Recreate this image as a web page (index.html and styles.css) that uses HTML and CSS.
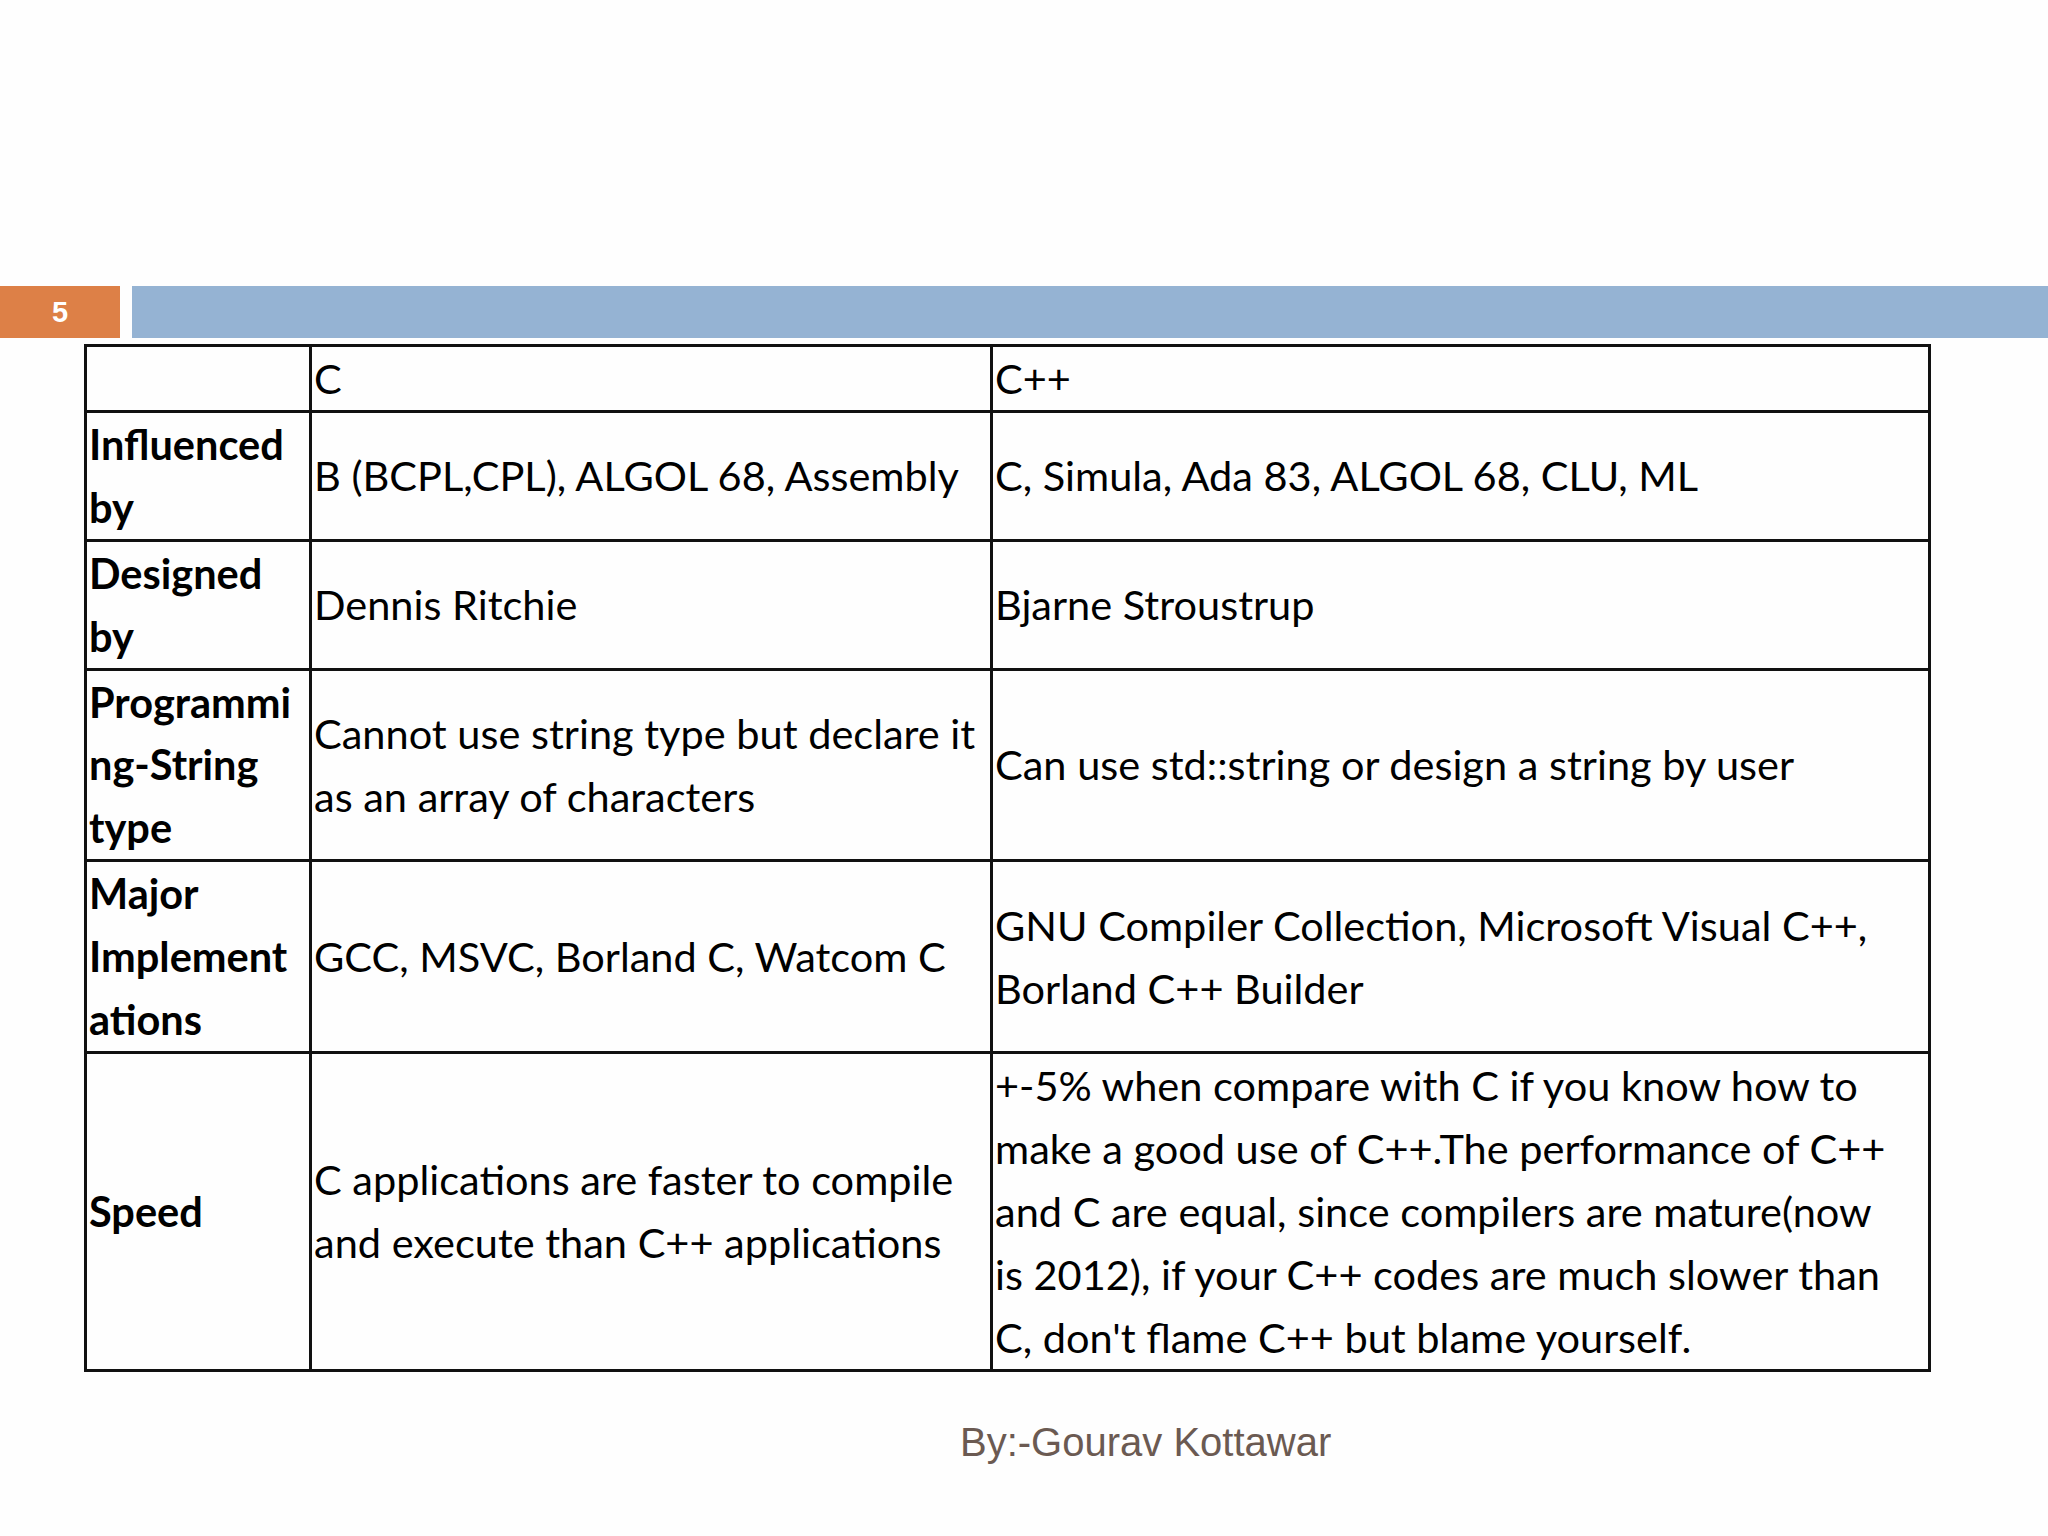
FILE: index.html
```html
<!DOCTYPE html>
<html>
<head>
<meta charset="utf-8">
<link rel="stylesheet" href="styles.css">
</head>
<body>
<div class="slide">
  <div class="topbar">
    <div class="num">5</div>
    <div class="bar"></div>
  </div>
  <table class="cmp">
    <colgroup>
      <col class="c1">
      <col class="c2">
      <col class="c3">
    </colgroup>
    <tr class="head">
      <td></td>
      <td>C</td>
      <td>C++</td>
    </tr>
    <tr>
      <th>Influenced<br>by</th>
      <td>B (BCPL,CPL), ALGOL 68, Assembly</td>
      <td>C, Simula, Ada 83, ALGOL 68, CLU, ML</td>
    </tr>
    <tr>
      <th>Designed<br>by</th>
      <td>Dennis Ritchie</td>
      <td>Bjarne Stroustrup</td>
    </tr>
    <tr>
      <th>Programmi<br>ng-String<br>type</th>
      <td>Cannot use string type but declare it<br>as an array of characters</td>
      <td>Can use std::string or design a string by user</td>
    </tr>
    <tr>
      <th>Major<br>Implement<br>ations</th>
      <td>GCC, MSVC, Borland C, Watcom C</td>
      <td>GNU Compiler Collection, Microsoft Visual C++,<br>Borland C++ Builder</td>
    </tr>
    <tr>
      <th>Speed</th>
      <td>C applications are faster to compile<br>and execute than C++ applications</td>
      <td>+-5% when compare with C if you know how to<br>make a good use of C++.The performance of C++<br>and C are equal, since compilers are mature(now<br>is 2012), if your C++ codes are much slower than<br>C, don't flame C++ but blame yourself.</td>
    </tr>
  </table>
  <div class="footer">By:-Gourav Kottawar</div>
</div>
</body>
</html>
```
FILE: styles.css
```css
html, body {
  margin: 0;
  padding: 0;
  background: #fefefe;
}

.slide {
  width: 2048px;
  height: 1536px;
  padding-top: 286px;
  box-sizing: border-box;
}

.topbar {
  display: flex;
  gap: 12px;
  height: 52px;
}

.num {
  width: 120px;
  background: #dd8047;
  color: #ffffff;
  font-family: "Liberation Sans", Arial, sans-serif;
  font-weight: bold;
  font-size: 29px;
  display: flex;
  align-items: center;
  justify-content: center;
}

.bar {
  flex: 1;
  background: #95b3d3;
}

.cmp {
  margin-top: 6px;
  margin-left: 84px;
  width: 1844px;
  border-collapse: collapse;
  table-layout: fixed;
  font-family: Lato, "Open Sans", sans-serif;
  font-size: 41.5px;
  line-height: 62.9px;
  color: #000;
}

.c1 { width: 225px; }
.c2 { width: 681px; }
.c3 { width: 938px; }

.cmp td, .cmp th {
  border: 3px solid #111;
  padding: 0 0 0 2px;
  vertical-align: middle;
  text-align: left;
  white-space: nowrap;
  overflow: visible;
}

.cmp th {
  font-weight: bold;
}

.footer {
  margin-top: 48px;
  padding-left: 960px;
  font-family: "Liberation Sans", Arial, sans-serif;
  font-size: 40px;
  color: #6b5a52;
}
```
